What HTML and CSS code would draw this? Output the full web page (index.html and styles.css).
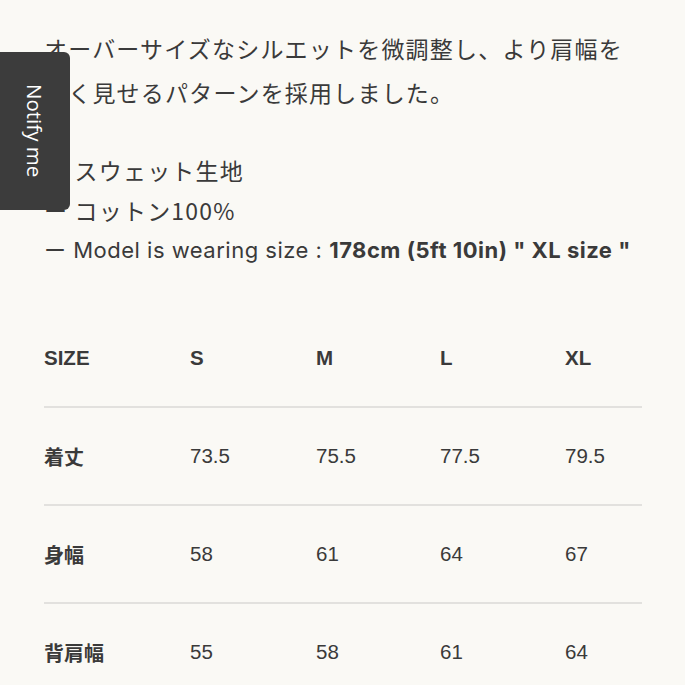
FILE: index.html
```html
<!DOCTYPE html>
<html lang="ja">
<head>
<meta charset="utf-8">
<link rel="stylesheet" href="styles.css">
</head>
<body>
<main class="page">
  <p class="lead">オーバーサイズなシルエットを微調整し、より肩幅を<br>広く見せるパターンを採用しました。</p>
  <div class="specs">
    <p class="spec">ー スウェット生地</p>
    <p class="spec">ー コットン100%</p>
    <p class="spec model">ー Model is wearing size : <strong>178cm (5ft 10in) " XL size "</strong></p>
  </div>
  <div class="size-table">
    <div class="row head">
      <span>SIZE</span><span>S</span><span>M</span><span>L</span><span>XL</span>
    </div>
    <div class="row">
      <span class="label">着丈</span><span>73.5</span><span>75.5</span><span>77.5</span><span>79.5</span>
    </div>
    <div class="row">
      <span class="label">身幅</span><span>58</span><span>61</span><span>64</span><span>67</span>
    </div>
    <div class="row">
      <span class="label">背肩幅</span><span>55</span><span>58</span><span>61</span><span>64</span>
    </div>
  </div>
</main>
<button class="notify">Notify me</button>
</body>
</html>
```
FILE: styles.css
```css
html, body {
  margin: 0;
  padding: 0;
  background: #faf9f5;
}
body {
  color: #3a3a3a;
  font-family: "Noto Sans CJK JP", sans-serif;
}
.page {
  padding: 26px 43px 0 44px;
}
.lead {
  margin: 0;
  font-size: 23px;
  letter-spacing: 1.2px;
  line-height: 44px;
  font-family: "Noto Sans CJK JP", sans-serif;
}
.specs {
  margin-top: 36px;
}
.spec {
  margin: 0;
  font-size: 23px;
  line-height: 40px;
  letter-spacing: 1.2px;
  font-family: "Noto Sans CJK JP", sans-serif;
  white-space: nowrap;
}
.model {
  font-family: "Inter", "Noto Sans CJK JP", sans-serif;
  font-size: 22px;
  letter-spacing: 0.5px;
}
.spec strong {
  font-weight: 700;
}
.size-table {
  margin-top: 40px;
  font-family: "Liberation Sans", "Noto Sans CJK JP", sans-serif;
  font-size: 20.5px;
}
.row {
  display: grid;
  grid-template-columns: 146px 126px 124px 125px 1fr;
  height: 96px;
  align-items: center;
  border-bottom: 2px solid #e2e1de;
}
.row:last-child {
  border-bottom: none;
}
.head {
  font-weight: 700;
}
.label {
  font-family: "Noto Sans CJK JP", sans-serif;
  font-weight: 700;
  font-size: 20px;
}
.notify {
  position: fixed;
  left: 0;
  top: 52px;
  width: 70px;
  height: 158px;
  padding: 0;
  border: none;
  border-radius: 0 6px 6px 0;
  background: #3c3c3c;
  color: #ffffff;
  font-family: "Open Sans", sans-serif;
  font-size: 20.5px;
  writing-mode: vertical-rl;
  display: flex;
  align-items: center;
  justify-content: center;
}
```
